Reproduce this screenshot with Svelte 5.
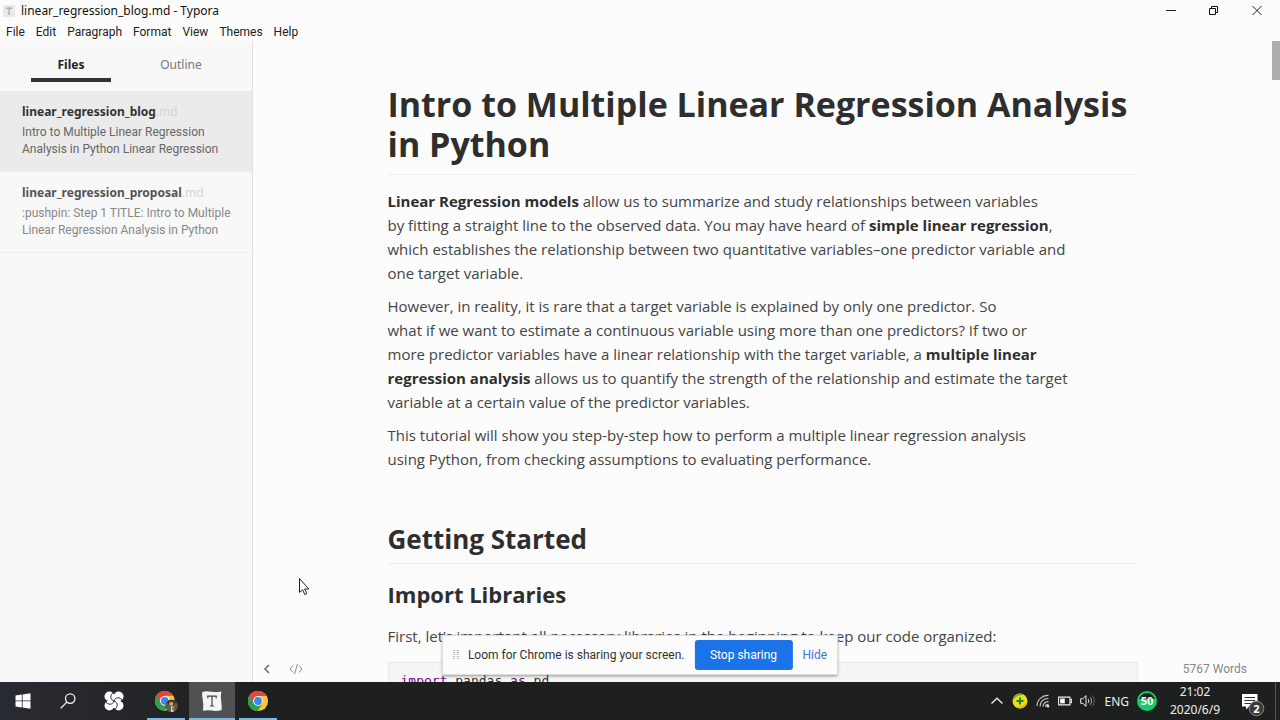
<script>
  const menus = ['File', 'Edit', 'Paragraph', 'Format', 'View', 'Themes', 'Help'];
  const files = [
    {
      name: 'linear_regression_blog',
      lines: ['Intro to Multiple Linear Regression', 'Analysis in Python Linear Regression'],
      active: true
    },
    {
      name: 'linear_regression_proposal',
      lines: [':pushpin: Step 1 TITLE: Intro to Multiple', 'Linear Regression Analysis in Python'],
      active: false
    }
  ];
</script>

{#snippet chrome()}
  <circle cx="12" cy="12" r="11" fill="#fbc834" />
  <path d="M12 12 2.5 6.5A11 11 0 0 1 21.5 6.5H12Z" fill="#e0463a" />
  <path d="M2.5 6.5A11 11 0 0 0 11.5 23L16.8 14.8 12 12 7.2 14.7Z" fill="#2f9e4f" />
  <path d="M2.5 6.5 7.2 14.7 12 12V6.5Z" fill="#e0463a" />
  <path d="M2.5 6.5A11 11 0 0 0 11.5 23L16.6 14.6A5.4 5.4 0 0 1 7.3 14.7Z" fill="#2f9e4f" />
  <circle cx="12" cy="12" r="5.4" fill="#f2f5fa" />
  <circle cx="12" cy="12" r="4.3" fill="#4285ec" />
{/snippet}

<div class="desktop">
  <div class="window">
    <header class="titlebar">
      <svg class="doc-icon" width="12" height="12" viewBox="0 0 12 12" aria-hidden="true">
        <rect width="12" height="12" rx="1" fill="#e9e9e9" />
        <path d="M3.5 4V3H8.5V4M6 3V9M5 9H7" fill="none" stroke="#999" />
      </svg>
      <span class="title">linear_regression_blog.md - Typora</span>
      <div class="controls">
        <button aria-label="Minimize">
          <svg width="12" height="12" viewBox="0 0 12 12"><path d="M1 5.5H11" stroke="#222" /></svg>
        </button>
        <button aria-label="Restore">
          <svg width="12" height="12" viewBox="0 0 12 12">
            <path d="M1.5 3.5H7.5V9.5H1.5ZM3.5 3.5V1.5H9.5V7.5H7.5" fill="none" stroke="#111" />
          </svg>
        </button>
        <button aria-label="Close">
          <svg width="12" height="12" viewBox="0 0 12 12">
            <path d="M1.5 1 10.5 10M10.5 1 1.5 10" stroke="#222" />
          </svg>
        </button>
      </div>
    </header>

    <nav class="menubar">
      {#each menus as menu}
        <button>{menu}</button>
      {/each}
    </nav>

    <div class="body">
      <aside class="sidebar">
        <div class="tabs">
          <button class="tab selected">Files</button>
          <button class="tab">Outline</button>
        </div>
        {#each files as file}
          <button class="file" class:active={file.active}>
            <span class="name">{file.name}<span class="ext">.md</span></span>
            <span class="summary">{file.lines[0]}<br />{file.lines[1]}</span>
          </button>
        {/each}
      </aside>

      <main class="editor">
        <article>
          <h1>Intro to Multiple Linear Regression Analysis in Python</h1>
          <p>
            <strong>Linear Regression models</strong> allow us to summarize and study relationships between variables<br />
            by fitting a straight line to the observed data. You may have heard of <strong>simple linear regression</strong>,<br />
            which establishes the relationship between two quantitative variables–one predictor variable and<br />
            one target variable.
          </p>
          <p>
            However, in reality, it is rare that a target variable is explained by only one predictor. So<br />
            what if we want to estimate a continuous variable using more than one predictors? If two or<br />
            more predictor variables have a linear relationship with the target variable, a <strong>multiple linear<br />
            regression analysis</strong> allows us to quantify the strength of the relationship and estimate the target<br />
            variable at a certain value of the predictor variables.
          </p>
          <p>
            This tutorial will show you step-by-step how to perform a multiple linear regression analysis<br />
            using Python, from checking assumptions to evaluating performance.
          </p>
          <h2>Getting Started</h2>
          <h3>Import Libraries</h3>
          <p>First, let’s important all necessary libraries in the beginning to keep our code organized:</p>
          <pre><code><b>import</b> pandas <b>as</b> pd</code></pre>
        </article>

        <footer class="status">
          <button aria-label="Hide sidebar">
            <svg width="8" height="12" viewBox="0 0 8 12">
              <path d="M6 2 2 6 6 10" fill="none" stroke="#666" stroke-width="1.5" />
            </svg>
          </button>
          <button aria-label="Source code mode">
            <svg width="14" height="12" viewBox="0 0 14 12">
              <path d="M4 2.5 1 6 4 9.5M10 2.5 13 6 10 9.5M8.5 1 5.5 11" fill="none" stroke="#888" />
            </svg>
          </button>
          <button class="words">5767 Words</button>
        </footer>
        <div class="thumb"></div>
      </main>
    </div>

    <div class="sharing" role="status">
      <svg width="6" height="12" viewBox="0 0 6 12" aria-hidden="true">
        <path d="M1 1V11M5 1V11" stroke="#b5b5b5" stroke-width="2" stroke-dasharray="1 1" />
      </svg>
      <span>Loom for Chrome is sharing your screen.</span>
      <button class="stop">Stop sharing</button>
      <button class="hide">Hide</button>
    </div>

    <svg class="cursor" width="12" height="20" viewBox="0 0 12 20" aria-hidden="true">
      <path d="M1.5 1.5V15.5L4.6 12.7 6.8 17.6 8.8 16.7 6.7 12H10.8Z" fill="#fff" stroke="#222" />
    </svg>
  </div>

  <footer class="taskbar">
    <button class="system" aria-label="Start">
      <svg width="16" height="16" viewBox="0 0 16 16" fill="#fff">
        <path d="M0.5 2.4 6.8 1.5V7.5H0.5ZM7.6 1.4 15.5 0.3V7.5H7.6ZM0.5 8.3H6.8V14.4L0.5 13.5ZM7.6 8.3H15.5V15.7L7.6 14.6Z" />
      </svg>
    </button>
    <button class="system" aria-label="Search">
      <svg width="16" height="16" viewBox="0 0 16 16" fill="none" stroke="#eee" stroke-width="1.3">
        <circle cx="10.2" cy="5.6" r="4.7" /><path d="M6.8 9.1 0.8 15.2" />
      </svg>
    </button>
    <button class="system wide" aria-label="Pinwheel">
      <svg width="20" height="20" viewBox="0 0 20 20">
        <path d="M5 5H15V15H5Z" fill="#fff" />
        {#each [0, 90, 180, 270] as angle}
          <circle transform="rotate({angle} 10 10)" cx="5.4" cy="5.4" r="4.9" fill="#fff" />
        {/each}
        {#each [0, 90, 180, 270] as angle}
          <path transform="rotate({angle} 10 10)" d="M10 10C6 9 5.6 4 9.8 1" fill="none" stroke="#26282d" />
        {/each}
      </svg>
    </button>
    <button class="app" aria-label="Chrome, profile">
      <svg width="24" height="24" viewBox="0 0 24 24">
        <g transform="translate(0 1) scale(.9)">{@render chrome()}</g>
        <circle cx="17.5" cy="17" r="6.2" fill="#5d5a46" />
        <path d="M13 13C15 10 20 10 22 13L20 16H15Z" fill="#34382c" />
        <circle cx="17.3" cy="14.8" r="2.1" fill="#c79b7b" />
        <path d="M14.5 18H17V22.5L14.8 21.8Z" fill="#3d7655" />
        <path d="M17 17.5H19.5V22.8H17Z" fill="#e4d6cd" />
        <path d="M18 18.5H19.3V21H18Z" fill="#c9463e" />
      </svg>
    </button>
    <button class="app current" aria-label="Typora">
      <svg width="22" height="22" viewBox="0 0 22 22">
        <path d="M1.2 2.2Q4 .6 8 1.6 14 2.6 20.4 1.4 19.2 6 20.2 11 21 16 20.6 20 16 21.4 11 20.6 6 20 2 20.8 2.8 15 1.8 10 .8 6 1.2 2.2Z" fill="#f4f4f4" />
        <path d="M6.8 8.2V6.2H15.2V8.2M11 6.4V16M9 16H13" fill="none" stroke="#444" stroke-width="1.2" />
      </svg>
    </button>
    <button class="app" aria-label="Chrome">
      <svg width="22" height="22" viewBox="0 0 24 24">{@render chrome()}</svg>
    </button>

    <div class="tray">
      <button aria-label="Show hidden icons">
        <svg width="14" height="14" viewBox="0 0 14 14"><path d="M1.5 9.5 7 4.2 12.5 9.5" fill="none" stroke="#eee" stroke-width="1.3" /></svg>
      </button>
      <button aria-label="Security">
        <svg width="16" height="16" viewBox="0 0 16 16">
          <circle cx="8" cy="8" r="7.5" fill="#f3dd18" />
          <path d="M.6 8A7.5 7.5 0 0 1 13 2.5C8 .8 3 4 .6 8Z" fill="#74ad1d" />
          <path d="M15.4 8A7.5 7.5 0 0 1 3 13.5C8 15.2 13 12 15.4 8Z" fill="#e5b417" />
          <path d="M8 4.5V11.5M4.5 8H11.5" stroke="#238226" stroke-width="2" />
        </svg>
      </button>
      <button aria-label="Network">
        <svg width="14" height="14" viewBox="0 0 14 14" fill="none" stroke="#c8c8c8" stroke-width="1.1">
          <path d="M1 12C1 6 6 1 12.5 1.4M4 12.5C4 8 7.5 4.2 12.5 4.5M7 12.8C7 9.8 9.2 7.4 12.5 7.6M9.6 13C9.6 11.4 10.8 10.4 12.5 10.4" />
          <circle cx="12" cy="12.3" r="1.2" fill="#eee" stroke="none" />
        </svg>
      </button>
      <button aria-label="Battery">
        <svg width="14" height="10" viewBox="0 0 14 10">
          <path d="M.6 1.1H11.9V8.9H.6ZM11.9 3.2H13.4V6.8H11.9" fill="none" stroke="#eee" stroke-width="1.1" />
          <path d="M2.2 2.6H6.8V7.4H2.2Z" fill="#fff" />
        </svg>
      </button>
      <button aria-label="Volume">
        <svg width="16" height="14" viewBox="0 0 16 14" fill="none" stroke="#eee">
          <path d="M.7 4.7H2.8L6 1.6V12.4L2.8 9.3H.7Z" /><path d="M8 5C9.1 6 9.1 8 8 9" />
          <path d="M10 3.2C12 5.2 12 8.8 10 10.8" stroke="#aaa" /><path d="M12 1.5C15 4.3 15 9.7 12 12.5" stroke="#666" />
        </svg>
      </button>
      <button class="lang">ENG</button>
      <button class="score">50</button>
      <button class="clock">21:02<br />2020/6/9</button>
      <button class="notices" aria-label="Notifications">
        <svg width="24" height="24" viewBox="0 0 24 24">
          <path d="M1 1H16.5V13.5H8L5 16.5V13.5H1Z" fill="#fff" />
          <path d="M3.5 4.5H14M3.5 7.5H14M3.5 10.5H10" stroke="#333" />
          <circle cx="15.5" cy="15.5" r="7.3" fill="#3a3a3a" stroke="#888" />
          <text x="15.5" y="19.5" text-anchor="middle" fill="#fff">2</text>
        </svg>
      </button>
    </div>
  </footer>
</div>

<style>
  :global(body) {
    margin: 0;
    overflow: hidden;
  }
  .desktop {
    display: flex;
    flex-direction: column;
    height: 100vh;
    background: #fcfcfc;
    color: #333;
    font-family: 'Noto Sans', 'Open Sans', sans-serif;
    font-size: 12px;
  }
  button {
    padding: 0;
    border: 0;
    background: none;
    color: inherit;
    font: inherit;
  }
  svg {
    display: block;
  }
  .window {
    position: relative;
    display: flex;
    flex: 1;
    flex-direction: column;
    min-height: 0;
  }
  .titlebar {
    display: flex;
    align-items: center;
    height: 21px;
    padding-left: 3px;
    color: #111;
  }
  .title {
    margin-left: 6px;
  }
  .controls {
    display: flex;
    margin-left: auto;
    padding-right: 2px;
  }
  .controls button {
    display: grid;
    place-items: center;
    width: 43px;
    height: 20px;
  }
  .menubar {
    display: flex;
    gap: 11px;
    height: 20px;
    padding: 2px 0 0 6px;
    box-sizing: border-box;
    color: #222;
    font-family: Roboto, sans-serif;
  }
  .body {
    display: flex;
    flex: 1;
    min-height: 0;
  }
  .sidebar {
    flex: none;
    width: 252px;
    border-right: 1px solid #e2e2e2;
    background: #f8f8f8;
  }
  .tabs {
    display: flex;
    gap: 30px;
    height: 50px;
    padding: 0 31px;
  }
  .tab {
    flex: 1;
    height: 41px;
    padding-top: 10px;
    box-sizing: border-box;
    border-bottom: 4px solid transparent;
    color: #777;
  }
  .tab.selected {
    border-color: #333;
    color: #222;
    font-weight: 700;
  }
  .file {
    display: flex;
    flex-direction: column;
    gap: 4px;
    width: 100%;
    height: 81px;
    padding: 12px 0 0 22px;
    box-sizing: border-box;
    border-bottom: 1px solid #eee;
    color: #888;
    line-height: 17px;
    text-align: left;
    white-space: nowrap;
  }
  .file.active {
    background: #ebebeb;
    color: #666;
  }
  .summary {
    font-family: Roboto, sans-serif;
  }
  .name {
    color: #555;
    font-weight: 700;
  }
  .active .name {
    color: #333;
  }
  .ext {
    color: #d4d4d4;
    font-weight: 400;
  }
  .editor {
    position: relative;
    flex: 1;
    min-width: 0;
    overflow: hidden;
    font-family: 'Open Sans', sans-serif;
  }
  article {
    max-width: 750px;
    margin: 0 auto;
    padding: 43px 8px 0 0;
    font-size: 15px;
    line-height: 24px;
  }
  h1,
  h2,
  h3 {
    margin: 0;
    color: #2e2e2e;
    font-weight: 700;
  }
  h1 {
    padding-bottom: 10px;
    border-bottom: 1px solid #eee;
    font-size: 34px;
    line-height: 40px;
  }
  h2 {
    margin-top: 52px;
    padding-bottom: 7px;
    border-bottom: 1px solid #eee;
    font-size: 26px;
    line-height: 33px;
  }
  h3 {
    margin-top: 14px;
    font-size: 22px;
    line-height: 33px;
  }
  p {
    margin: 9px 0;
    color: #444;
    white-space: nowrap;
  }
  h1 + p {
    margin-top: 14px;
  }
  h3 + p {
    margin-top: 13px;
  }
  strong {
    color: #2e2e2e;
  }
  pre {
    margin: 14px 0 0;
    padding: 6px 12px;
    border: 1px solid #e7eaed;
    background: #f5f5f5;
    font-size: 13px;
  }
  code {
    font-family: 'DejaVu Sans Mono', monospace;
  }
  code b {
    color: #708;
    font-weight: 400;
  }
  .status {
    position: absolute;
    inset: auto 8px 0 0;
    display: flex;
    gap: 18px;
    align-items: center;
    height: 26px;
    padding: 0 25px 0 10px;
  }
  .words {
    margin-left: auto;
    color: #888;
    font-family: Roboto, sans-serif;
  }
  .thumb {
    position: absolute;
    top: 0;
    right: 0;
    width: 8px;
    height: 39px;
    background: #adadad;
  }
  .sharing {
    position: absolute;
    bottom: 7px;
    left: 50%;
    display: flex;
    align-items: center;
    height: 38px;
    padding: 0 10px;
    border: 1px solid #ddd;
    background: #fcfcfc;
    box-shadow: 0 1px 3px #0006;
    font-family: Roboto, sans-serif;
    transform: translateX(-50%);
    white-space: nowrap;
  }
  .sharing span {
    margin: 0 10px 0 9px;
  }
  .stop {
    width: 98px;
    height: 30px;
    border-radius: 3px;
    background: #1a73e8;
    color: #fff;
  }
  .hide {
    margin-left: 10px;
    color: #3f74d3;
  }
  .cursor {
    position: absolute;
    top: 577px;
    left: 298px;
  }
  .taskbar {
    display: flex;
    height: 38px;
    background: linear-gradient(90deg, #292b32, #1e2020 20%);
    color: #eee;
  }
  .taskbar button {
    display: grid;
    place-items: center;
  }
  .system {
    width: 45px;
  }
  .system.wide {
    width: 48px;
    margin-right: 5px;
  }
  .app {
    position: relative;
    width: 46px;
  }
  .app::after {
    position: absolute;
    inset: auto 4px 0;
    height: 2px;
    background: #76b9ed;
    content: '';
  }
  .app.current {
    background: #505152;
  }
  .app.current::after {
    inset: auto 0 0;
  }
  .tray {
    display: flex;
    gap: 8px;
    align-items: center;
    margin-left: auto;
    padding-right: 10px;
    border-right: 1px solid #555;
    margin-right: 4px;
  }
  .tray .score {
    width: 20px;
    height: 20px;
    box-sizing: border-box;
    border: 2px solid #13cd68;
    border-radius: 50%;
    background: linear-gradient(#1e2020 40%, #13cd68 40%);
    color: #fff;
    font-size: 11px;
    font-weight: 700;
    line-height: 16px;
  }
  .tray .clock {
    display: block;
    width: 60px;
    margin-right: 8px;
    line-height: 18px;
    text-align: center;
  }
  .tray .notices {
    align-self: end;
    margin-bottom: 3px;
  }
  .notices text {
    font-size: 11px;
    font-weight: 700;
  }
</style>
